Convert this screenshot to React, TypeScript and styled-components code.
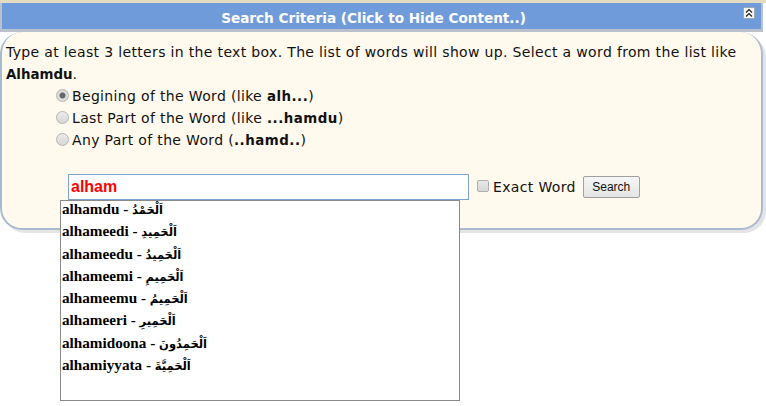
import React from "react";
import styled, { createGlobalStyle } from "styled-components";

const WORDS = [
  ["alhamdu", "اَلْحَمْدُ"],
  ["alhameedi", "اَلْحَمِيدِ"],
  ["alhameedu", "اَلْحَمِيدُ"],
  ["alhameemi", "اَلْحَمِيمِ"],
  ["alhameemu", "اَلْحَمِيمُ"],
  ["alhameeri", "اَلْحَمِيرِ"],
  ["alhamidoona", "اَلْحَمِدُونَ"],
  ["alhamiyyata", "اَلْحَمِيَّةَ"],
];

const OPTIONS = [
  { before: "Begining of the Word (like ", bold: "alh...", after: ")", checked: true },
  { before: "Last Part of the Word (like ", bold: "...hamdu", after: ")", checked: false },
  { before: "Any Part of the Word (", bold: "..hamd..", after: ")", checked: false },
];

const App = () => {
  return (
    <Page>
      <GlobalStyle />
      <TopStrip />
      <Header>
        <HeaderTitle>Search Criteria (Click to Hide Content..)</HeaderTitle>
        <Collapse>
          <svg width="12" height="12" viewBox="0 0 12 12">
            <rect x="0.5" y="0.5" width="11" height="11" fill="#f4f4f0" stroke="#8a8a8a" strokeDasharray="1 1" />
            <path d="M3 5.5 L6 2.5 L9 5.5 M3 9.5 L6 6.5 L9 9.5" fill="none" stroke="#222" strokeWidth="1.2" />
          </svg>
        </Collapse>
      </Header>
      <Panel>
        <Intro>
          Type at least 3 letters in the text box. The list of words will show up. Select a word from the list like <Strong>Alhamdu</Strong>.
        </Intro>
        <Options>
          {OPTIONS.map((o) => (
            <OptionRow key={o.before}>
              <Radio $checked={o.checked} />
              <span>
                {o.before}
                <OptionStrong>{o.bold}</OptionStrong>
                {o.after}
              </span>
            </OptionRow>
          ))}
        </Options>
        <SearchRow>
          <SearchBox>
            <SearchInput defaultValue="alham" />
            <Suggestions>
              {WORDS.map(([latin, arabic]) => (
                <Suggestion key={latin}>
                  {latin} - <ArabicWord dir="rtl">{arabic}</ArabicWord>
                </Suggestion>
              ))}
            </Suggestions>
          </SearchBox>
          <Check />
          <CheckLabel>Exact Word</CheckLabel>
          <SearchButton>Search</SearchButton>
        </SearchRow>
      </Panel>
    </Page>
  );
};

export default App;

const GlobalStyle = createGlobalStyle`
  html, body {
    margin: 0;
    background: #fff;
    overflow: hidden;
  }
`;

const Page = styled.div`
  width: 766px;
  height: 406px;
  font-family: "DejaVu Sans", sans-serif;
  font-size: 14px;
  letter-spacing: 0.34px;
  color: #111;
`;

const TopStrip = styled.div`
  height: 3px;
  background: #e4dcc0;
`;

const Header = styled.div`
  position: relative;
  box-sizing: border-box;
  width: 763px;
  height: 29px;
  padding: 3px 16px 0 0;
  background: #6f9bdb;
  border: 2px solid #b9c1cc;
  border-top: 0;
  border-bottom-width: 3px;
  display: flex;
  align-items: center;
  justify-content: center;
`;

const HeaderTitle = styled.span`
  color: #fff;
  font-weight: bold;
  font-size: 13.6px;
  letter-spacing: 0;
`;

const Collapse = styled.span`
  position: absolute;
  top: 4px;
  right: 6px;
  line-height: 0;
`;

const Panel = styled.div`
  box-sizing: border-box;
  width: 763px;
  height: 198px;
  background: #fff9ee;
  border: 2px solid #a9bbd1;
  border-top-width: 0;
  border-radius: 22px;
  box-shadow: 3px 3px 0 #e4e4e4;
  padding: 9px 4px;
`;

const Intro = styled.div`
  line-height: 22px;
`;

const Strong = styled.b`
  font-size: 13.4px;
  line-height: 1;
  letter-spacing: 0;
`;

const OptionStrong = styled(Strong)`
  letter-spacing: 0.5px;
`;

const Options = styled.div`
  display: flex;
  flex-direction: column;
  padding-left: 50px;
`;

const OptionRow = styled.div`
  display: flex;
  align-items: center;
  gap: 3px;
  height: 22px;
`;

const Radio = styled.span<{ $checked: boolean }>`
  box-sizing: border-box;
  width: 13px;
  height: 13px;
  margin-top: -2px;
  border-radius: 50%;
  border: 1px solid #b4b4b4;
  background: ${(p) =>
    p.$checked
      ? "radial-gradient(circle, #666 0 2.5px, #dcdcdc 3.5px)"
      : "linear-gradient(#ececec, #d6d6d6)"};
`;

const SearchRow = styled.div`
  display: flex;
  align-items: center;
  margin-top: 23px;
  padding-left: 62px;
`;

const SearchBox = styled.div`
  position: relative;
  width: 401px;
  height: 26px;
`;

const SearchInput = styled.input`
  box-sizing: border-box;
  width: 100%;
  height: 100%;
  border: 1px solid #7da2ce;
  outline: 0;
  padding: 0 2px;
  color: #f00;
  font-family: "Liberation Sans", sans-serif;
  font-weight: bold;
  font-size: 16px;
`;

const Suggestions = styled.div`
  position: absolute;
  top: 26px;
  left: -8px;
  box-sizing: border-box;
  width: 400px;
  height: 201px;
  background: #fff;
  border: 1px solid #8a8a8a;
  padding: 0 1px;
`;

const Suggestion = styled.div`
  height: 22.3px;
  font-family: "Liberation Serif", serif;
  font-weight: bold;
  font-size: 15.2px;
  letter-spacing: 0;
  line-height: 16px;
  color: #000;
`;

const ArabicWord = styled.span`
  font-family: "DejaVu Sans", sans-serif;
  font-size: 11.5px;
  line-height: 1;
`;

const Check = styled.span`
  box-sizing: border-box;
  width: 12px;
  height: 12px;
  margin-left: 8px;
  margin-top: -2px;
  border: 1px solid #b0b0b0;
  border-radius: 2px;
  background: linear-gradient(#e8e8e8, #d8d8d8);
`;

const CheckLabel = styled.span`
  margin-left: 4px;
`;

const SearchButton = styled.button`
  box-sizing: border-box;
  width: 57px;
  height: 22px;
  margin-left: 7px;
  padding: 0;
  background: linear-gradient(#f6f6f6, #e4e4e4);
  border: 1px solid #a0a0a0;
  border-radius: 2px;
  color: #111;
  font-family: "Liberation Sans", sans-serif;
  font-size: 12px;
`;
